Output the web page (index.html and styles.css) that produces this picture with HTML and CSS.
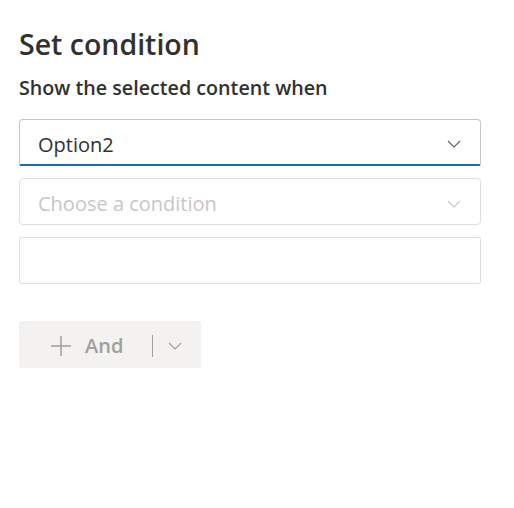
FILE: index.html
```html
<!DOCTYPE html>
<html>
<head>
<meta charset="utf-8">
<link rel="stylesheet" href="styles.css">
</head>
<body>
<div class="panel">
  <h1 class="title">Set condition</h1>
  <div class="subtitle">Show the selected content when</div>
  <div class="fields">
    <div class="dropdown active">
      <span class="value">Option2</span>
      <svg class="chev" width="14" height="8" viewBox="0 0 14 8"><path d="M1 1 L7 7 L13 1" fill="none" stroke="#605e5c" stroke-width="1.1"/></svg>
    </div>
    <div class="dropdown disabled">
      <span class="placeholder">Choose a condition</span>
      <svg class="chev" width="14" height="8" viewBox="0 0 14 8"><path d="M1 1 L7 7 L13 1" fill="none" stroke="#c8c6c4" stroke-width="1.1"/></svg>
    </div>
    <div class="textfield"></div>
  </div>
  <div class="split">
    <div class="split-main">
      <svg width="22" height="22" viewBox="0 0 22 22"><path d="M11 1 V21 M1 11 H21" stroke="#a19f9d" stroke-width="1.5" fill="none"/></svg>
      <span class="label">And</span>
    </div>
    <span class="divider"></span>
    <svg class="split-chev" width="14" height="8" viewBox="0 0 14 8"><path d="M1 1 L7 7 L13 1" fill="none" stroke="#a19f9d" stroke-width="1.1"/></svg>
  </div>
</div>
</body>
</html>
```
FILE: styles.css
```css
html, body {
  margin: 0;
  padding: 0;
  background: #ffffff;
}
body {
  font-family: "Open Sans", "Noto Sans", sans-serif;
  color: #323130;
}
.panel {
  padding: 24px 33px 0 19px;
}
.title {
  margin: 0;
  font-size: 28.5px;
  font-weight: 600;
  line-height: 40px;
  color: #323130;
}
.subtitle {
  margin-top: 10px;
  font-size: 19.7px;
  font-weight: 600;
  line-height: 28px;
  color: #323130;
}
.fields {
  margin-top: 17px;
  display: flex;
  flex-direction: column;
  gap: 12px;
}
.dropdown {
  box-sizing: border-box;
  height: 47px;
  border: 1px solid #c8c6c4;
  border-radius: 4px;
  display: flex;
  align-items: center;
  justify-content: space-between;
  padding: 4px 19px 0 18px;
}
.dropdown.active {
  border-color: #c8c6c4;
  border-bottom: 2px solid #1b6fb0;
  border-radius: 4px 4px 2px 2px;
}
.dropdown.disabled {
  border-color: #e1dfdd;
}
.value {
  font-size: 20px;
  color: #323130;
}
.placeholder {
  font-size: 20px;
  color: #c8c6c4;
}
.textfield {
  box-sizing: border-box;
  height: 47px;
  border: 1px solid #e1dfdd;
  border-radius: 2px;
}
.split {
  margin-top: 37px;
  width: 182px;
  height: 47px;
  background: #f3f2f1;
  border-radius: 3px;
  display: flex;
  align-items: center;
  box-sizing: border-box;
  padding: 2px 0 0 31px;
}
.split-main {
  display: flex;
  align-items: center;
  gap: 13px;
}
.label {
  font-size: 20px;
  font-weight: 600;
  color: #a19f9d;
}
.divider {
  width: 1px;
  height: 22px;
  background: #a19f9d;
  margin-left: 29px;
}
.split-chev {
  margin-left: 15px;
}
```
